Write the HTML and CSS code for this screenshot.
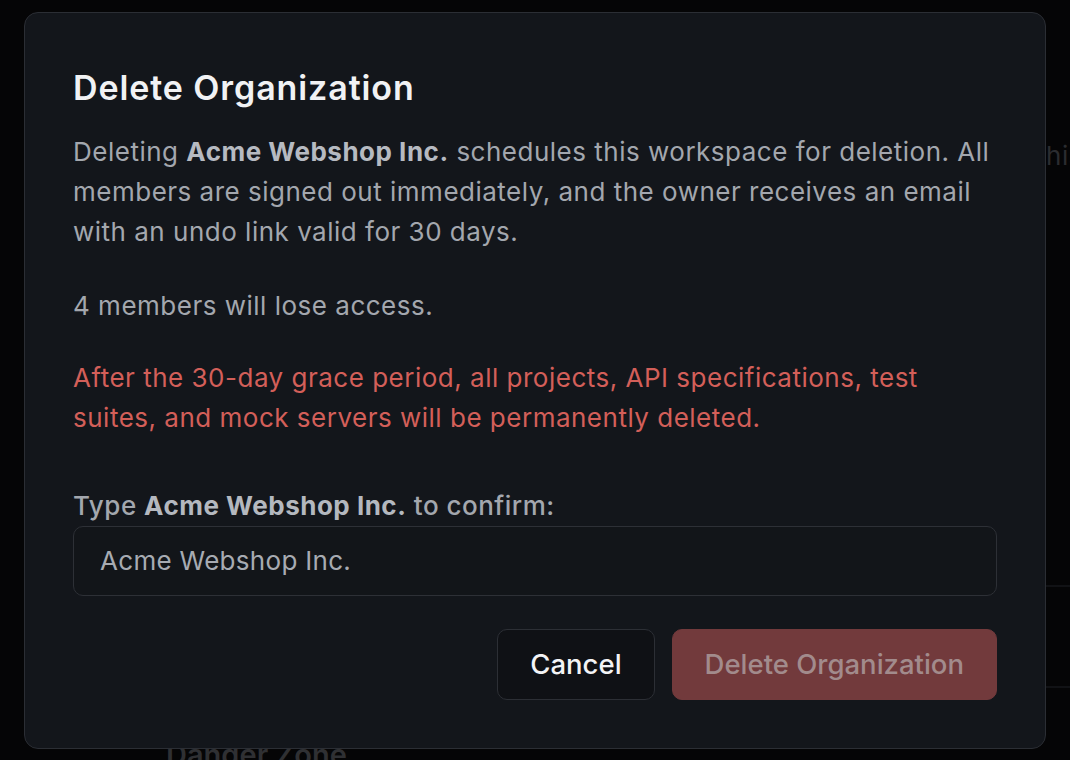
FILE: index.html
```html
<!DOCTYPE html>
<html lang="en">
<head>
<meta charset="utf-8">
<title>Delete Organization</title>
<link rel="stylesheet" href="styles.css">
</head>
<body>
<div class="page">
  <div class="page-row">
    <p class="page-note">Permanently delete this</p>
  </div>
  <div class="page-list"></div>
  <h2 class="page-heading">Danger Zone</h2>
</div>

<div class="overlay">
  <div class="modal" role="dialog" aria-labelledby="dlg-title">
    <h1 class="modal-title" id="dlg-title">Delete Organization</h1>
    <p class="modal-text">Deleting <strong>Acme Webshop Inc.</strong> schedules this workspace for deletion. All members are signed out immediately, and the owner receives an email with an undo link valid for 30 days.</p>
    <p class="modal-text modal-count">4 members will lose access.</p>
    <p class="modal-text modal-warning">After the 30-day grace period, all projects, API specifications, test suites, and mock servers will be permanently deleted.</p>
    <label class="modal-label" for="confirm">Type <strong>Acme Webshop Inc.</strong> to confirm:</label>
    <input class="modal-input" id="confirm" type="text" value="Acme Webshop Inc.">
    <div class="modal-actions">
      <button class="btn btn-cancel" type="button">Cancel</button>
      <button class="btn btn-delete" type="button">Delete Organization</button>
    </div>
  </div>
</div>
</body>
</html>
```

FILE: styles.css
```css
html, body {
  margin: 0;
  padding: 0;
}

body {
  background: #050506;
  font-family: Inter, "Noto Sans", sans-serif;
  width: 1070px;
  height: 760px;
  overflow: hidden;
}

.page {
  box-sizing: border-box;
  width: 1070px;
  height: 760px;
  overflow: hidden;
  padding: 0 0 0 166px;
}

.page-row {
  width: 917px;
  padding-top: 136px;
}

.page-note {
  margin: 0;
  text-align: right;
  font-size: 26px;
  line-height: 40px;
  letter-spacing: 0.5px;
  color: #2b2c2f;
  white-space: nowrap;
}

.page-list {
  margin-top: 409px;
  width: 917px;
  height: 99px;
  border-top: 2px solid #111215;
  border-bottom: 2px solid #111215;
}

.page-heading {
  margin: 47px 0 0;
  font-size: 29px;
  line-height: 40px;
  font-weight: 600;
  color: #2f3033;
}

.overlay {
  position: fixed;
  inset: 0;
  display: flex;
  align-items: center;
  justify-content: center;
}

.modal {
  box-sizing: border-box;
  width: 1022px;
  background: #13161b;
  border: 1px solid #2b2e34;
  border-radius: 14px;
  padding: 55px 48px 48px 48px;
  display: flex;
  flex-direction: column;
}

.modal-title {
  margin: 0 0 24px 0;
  font-size: 34px;
  line-height: 40px;
  font-weight: 600;
  letter-spacing: 0.9px;
  color: #f1f2f4;
}

.modal-text {
  margin: 0;
  font-size: 26px;
  line-height: 40px;
  letter-spacing: 0.5px;
  color: #a3a7ae;
}

.modal-text strong {
  font-weight: 700;
  color: #b6bac1;
}

.modal-count {
  margin-top: 34px;
}

.modal-warning {
  margin-top: 32px;
  color: #d35f59;
}

.modal-label {
  margin-top: 48px;
  font-size: 26px;
  line-height: 40px;
  letter-spacing: 0.5px;
  color: #a3a7ae;
  font-weight: 500;
}

.modal-label strong {
  font-weight: 700;
  color: #b4b8bf;
}

.modal-input {
  box-sizing: border-box;
  height: 70px;
  width: 100%;
  margin: 0;
  padding: 0 26px;
  background: #121519;
  border: 1px solid #2d3036;
  border-radius: 10px;
  font-family: inherit;
  font-size: 26px;
  letter-spacing: 0.3px;
  color: #a7abb2;
  outline: none;
}

.modal-actions {
  margin-top: 33px;
  display: flex;
  justify-content: flex-end;
  gap: 17px;
}

.btn {
  box-sizing: border-box;
  height: 71px;
  padding: 0 32px;
  border-radius: 10px;
  font-family: inherit;
  font-size: 27.5px;
  font-weight: 500;
  cursor: pointer;
}

.btn-cancel {
  background: #0f1115;
  border: 1px solid #2c2f35;
  color: #f3f4f6;
}

.btn-delete {
  background: #723a3c;
  border: 1px solid #723a3c;
  color: #a28b8c;
}
```
